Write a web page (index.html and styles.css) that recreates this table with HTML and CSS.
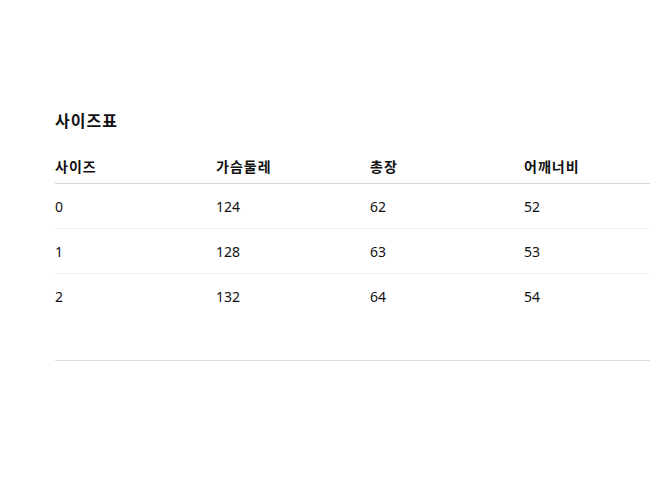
FILE: index.html
```html
<!DOCTYPE html>
<html lang="ko">
<head>
<meta charset="utf-8">
<link rel="stylesheet" href="styles.css">
</head>
<body>
<section class="size-section">
  <h2 class="size-title">사이즈표</h2>
  <table class="size-table">
    <thead>
      <tr><th>사이즈</th><th>가슴둘레</th><th>총장</th><th>어깨너비</th></tr>
    </thead>
    <tbody>
      <tr><td>0</td><td>124</td><td>62</td><td>52</td></tr>
      <tr><td>1</td><td>128</td><td>63</td><td>53</td></tr>
      <tr><td>2</td><td>132</td><td>64</td><td>54</td></tr>
    </tbody>
  </table>
</section>
</body>
</html>
```
FILE: styles.css
```css
html, body {
  margin: 0;
  padding: 0;
  background: #fff;
  overflow: hidden;
}
body {
  font-family: "Noto Sans", "Noto Sans CJK KR", sans-serif;
  color: #111;
  width: 650px;
  height: 478px;
}
.size-section {
  margin: 0 0 0 55px;
  padding-top: 109px;
  width: 623px;
  border-bottom: 1px solid #dcdcdc;
  padding-bottom: 42px;
}
.size-title {
  margin: 0 0 25px;
  font-size: 16px;
  line-height: 22px;
  letter-spacing: 1px;
  font-weight: 700;
  font-family: "Noto Sans CJK KR", sans-serif;
}
.size-table {
  width: 623px;
  border-collapse: collapse;
  table-layout: fixed;
  font-size: 14px;
}
.size-table th:nth-child(1), .size-table td:nth-child(1) { width: 161px; }
.size-table th, .size-table td {
  text-align: left;
  padding: 0;
}
.size-table th {
  font-family: "Noto Sans CJK KR", sans-serif;
  font-size: 14px;
  letter-spacing: 1px;
  font-weight: 700;
  line-height: 20px;
  padding-bottom: 7px;
  border-bottom: 1px solid #d6d6d6;
}
.size-table td {
  line-height: 20px;
  padding: 13px 0 11px;
  border-bottom: 1px solid #f0f0f0;
}
.size-table tbody tr:last-child td {
  border-bottom: none;
}
```
